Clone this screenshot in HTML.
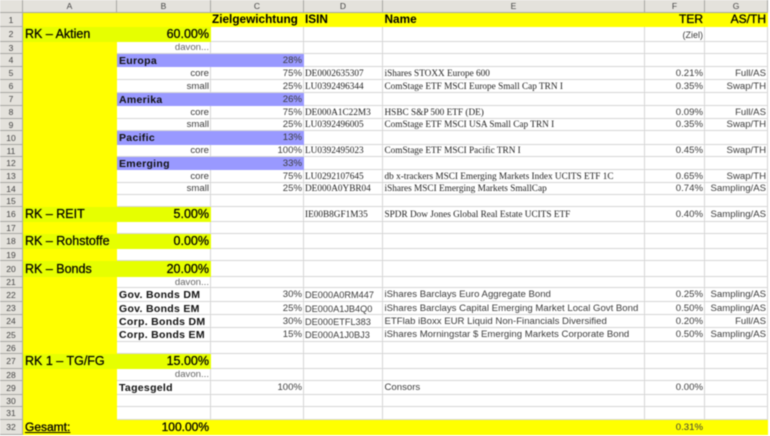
<!DOCTYPE html>
<html><head><meta charset="utf-8"><style>
html,body{margin:0;padding:0;width:770px;height:436px;overflow:hidden;background:#fff}
table{position:absolute;left:0;top:0;table-layout:fixed;border-collapse:separate;border-spacing:0;width:768px;font:9.6px "Liberation Sans",sans-serif;color:#3c3c3c;filter:blur(.45px)}
td,th{box-sizing:border-box;padding:1px 1px 0 1px;border-right:1px solid #d6d6d6;border-bottom:1px solid #d6d6d6;white-space:nowrap;overflow:hidden;font-weight:normal;text-align:left;vertical-align:middle;line-height:10px}
th{background:#e4e2dc;border-right:1px solid #a8a8a4;border-bottom:1px solid #a8a8a4;text-align:center;font-size:8.5px;color:#444;padding:0}
td:nth-child(6){padding-left:1.5px}
.y{background:#ffff00;border-color:#ffff00}
.l{background:#e6ff00;border-color:#e6ff00;color:#000;font-size:12.5px;line-height:13px;-webkit-text-stroke:.25px #000;padding-left:2px}
.p{background:#9999ff;border-color:#9999ff}
.b{font-weight:bold;color:#111;font-size:10.5px;letter-spacing:.3px;padding-left:2px}
.h{font-weight:bold;color:#000;font-size:11.8px;line-height:13px;padding-top:0}
.t{font-size:12px;font-weight:normal;-webkit-text-stroke:.3px #000}
.n{font-size:12px;font-weight:normal;-webkit-text-stroke:.3px #000;color:#000;padding-left:2px}
.r{text-align:right}
.s{font-family:"Liberation Serif",serif;font-size:9.25px;color:#222;padding-top:2px;line-height:9px}
.d{color:#666}
.u{text-decoration:underline}
</style></head><body>
<table>
<colgroup><col style="width:23px"><col style="width:94px"><col style="width:94px"><col style="width:93px"><col style="width:79px"><col style="width:262px"><col style="width:60px"><col style="width:63px"></colgroup>
<tr style="height:13px"><th></th><th>A</th><th>B</th><th>C</th><th>D</th><th>E</th><th>F</th><th>G</th></tr>
<tr style="height:14px"><th>1</th><td class="y"></td><td class="y"></td><td class="y h">Zielgewichtung</td><td class="y h">ISIN</td><td class="y h">Name</td><td class="y h t r">TER</td><td class="y h t r">AS/TH</td></tr>
<tr style="height:15px"><th>2</th><td class="l">RK – Aktien</td><td class="l r">60.00%</td><td></td><td></td><td></td><td class="r" style="font-size:9px">(Ziel)</td><td></td></tr>
<tr style="height:12px"><th>3</th><td class="y"></td><td class="r d">davon...</td><td></td><td></td><td></td><td></td><td></td></tr>
<tr style="height:13px"><th>4</th><td class="y"></td><td class="p b">Europa</td><td class="p r">28%</td><td></td><td></td><td></td><td></td></tr>
<tr style="height:13px"><th>5</th><td class="y"></td><td class="r">core</td><td class="r">75%</td><td class="s">DE0002635307</td><td class="s">iShares STOXX Europe 600</td><td class="r">0.21%</td><td class="r">Full/AS</td></tr>
<tr style="height:13px"><th>6</th><td class="y"></td><td class="r">small</td><td class="r">25%</td><td class="s">LU0392496344</td><td class="s">ComStage ETF MSCI Europe Small Cap TRN I</td><td class="r">0.35%</td><td class="r">Swap/TH</td></tr>
<tr style="height:13px"><th>7</th><td class="y"></td><td class="p b">Amerika</td><td class="p r">26%</td><td></td><td></td><td></td><td></td></tr>
<tr style="height:13px"><th>8</th><td class="y"></td><td class="r">core</td><td class="r">75%</td><td class="s">DE000A1C22M3</td><td class="s">HSBC S&amp;P 500 ETF (DE)</td><td class="r">0.09%</td><td class="r">Full/AS</td></tr>
<tr style="height:12px"><th>9</th><td class="y"></td><td class="r">small</td><td class="r">25%</td><td class="s">LU0392496005</td><td class="s">ComStage ETF MSCI USA Small Cap TRN I</td><td class="r">0.35%</td><td class="r">Swap/TH</td></tr>
<tr style="height:14px"><th>10</th><td class="y"></td><td class="p b">Pacific</td><td class="p r">13%</td><td></td><td></td><td></td><td></td></tr>
<tr style="height:12px"><th>11</th><td class="y"></td><td class="r">core</td><td class="r">100%</td><td class="s">LU0392495023</td><td class="s">ComStage ETF MSCI Pacific TRN I</td><td class="r">0.45%</td><td class="r">Swap/TH</td></tr>
<tr style="height:13px"><th>12</th><td class="y"></td><td class="p b">Emerging</td><td class="p r">33%</td><td></td><td></td><td></td><td></td></tr>
<tr style="height:13px"><th>13</th><td class="y"></td><td class="r">core</td><td class="r">75%</td><td class="s">LU0292107645</td><td class="s">db x-trackers MSCI Emerging Markets Index UCITS ETF 1C</td><td class="r">0.65%</td><td class="r">Swap/TH</td></tr>
<tr style="height:12px"><th>14</th><td class="y"></td><td class="r">small</td><td class="r">25%</td><td class="s">DE000A0YBR04</td><td class="s">iShares MSCI Emerging Markets SmallCap</td><td class="r">0.74%</td><td class="r">Sampling/AS</td></tr>
<tr style="height:12px"><th>15</th><td class="y"></td><td></td><td></td><td></td><td></td><td></td><td></td></tr>
<tr style="height:15px"><th>16</th><td class="l">RK – REIT</td><td class="l r">5.00%</td><td></td><td class="s">IE00B8GF1M35</td><td class="s">SPDR Dow Jones Global Real Estate UCITS ETF</td><td class="r">0.40%</td><td class="r">Sampling/AS</td></tr>
<tr style="height:12px"><th>17</th><td class="y"></td><td></td><td></td><td></td><td></td><td></td><td></td></tr>
<tr style="height:15px"><th>18</th><td class="l">RK – Rohstoffe</td><td class="l r">0.00%</td><td></td><td></td><td></td><td></td><td></td></tr>
<tr style="height:12px"><th>19</th><td class="y"></td><td></td><td></td><td></td><td></td><td></td><td></td></tr>
<tr style="height:16px"><th>20</th><td class="l">RK – Bonds</td><td class="l r">20.00%</td><td></td><td></td><td></td><td></td><td></td></tr>
<tr style="height:11px"><th>21</th><td class="y"></td><td class="r d" style="line-height:9px">davon...</td><td></td><td></td><td></td><td></td><td></td></tr>
<tr style="height:14px"><th>22</th><td class="y"></td><td class="b">Gov. Bonds DM</td><td class="r">30%</td><td style="font-size:9.2px">DE000A0RM447</td><td>iShares Barclays Euro Aggregate Bond</td><td class="r">0.25%</td><td class="r">Sampling/AS</td></tr>
<tr style="height:13px"><th>23</th><td class="y"></td><td class="b">Gov. Bonds EM</td><td class="r">25%</td><td style="font-size:9.2px">DE000A1JB4Q0</td><td>iShares Barclays Capital Emerging Market Local Govt Bond</td><td class="r">0.50%</td><td class="r">Sampling/AS</td></tr>
<tr style="height:13px"><th>24</th><td class="y"></td><td class="b">Corp. Bonds DM</td><td class="r">30%</td><td style="font-size:9.2px">DE000ETFL383</td><td>ETFlab iBoxx EUR Liquid Non-Financials Diversified</td><td class="r">0.20%</td><td class="r">Full/AS</td></tr>
<tr style="height:14px"><th>25</th><td class="y"></td><td class="b">Corp. Bonds EM</td><td class="r">15%</td><td style="font-size:9.2px">DE000A1J0BJ3</td><td>iShares Morningstar $ Emerging Markets Corporate Bond</td><td class="r">0.50%</td><td class="r">Sampling/AS</td></tr>
<tr style="height:12px"><th>26</th><td class="y"></td><td></td><td></td><td></td><td></td><td></td><td></td></tr>
<tr style="height:15px"><th>27</th><td class="l">RK 1 – TG/FG</td><td class="l r">15.00%</td><td></td><td></td><td></td><td></td><td></td></tr>
<tr style="height:12px"><th>28</th><td class="y"></td><td class="r d">davon...</td><td></td><td></td><td></td><td></td><td></td></tr>
<tr style="height:14px"><th>29</th><td class="y"></td><td class="b">Tagesgeld</td><td class="r">100%</td><td></td><td>Consors</td><td class="r">0.00%</td><td></td></tr>
<tr style="height:12px"><th>30</th><td class="y"></td><td></td><td></td><td></td><td></td><td></td><td></td></tr>
<tr style="height:13px"><th>31</th><td class="y"></td><td></td><td></td><td></td><td></td><td></td><td></td></tr>
<tr style="height:15px"><th>32</th><td class="y h u n">Gesamt:</td><td class="y h r n">100.00%</td><td class="y"></td><td class="y"></td><td class="y"></td><td class="y r">0.31%</td><td class="y"></td></tr>
</table>
</body></html>
